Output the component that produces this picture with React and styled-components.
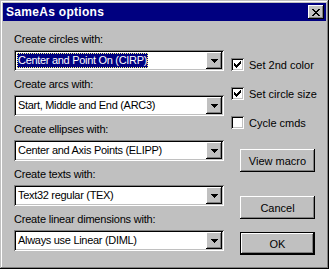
import React from "react";
import styled, { createGlobalStyle } from "styled-components";

const Global = createGlobalStyle`
  html, body { margin: 0; padding: 0; background: #c0c0c0; }
  body { font-family: "Liberation Sans", Arial, sans-serif; font-size: 11px; color: #000; }
`;

const raised = `
  box-shadow: inset -1px -1px #000, inset 1px 1px #fff, inset -2px -2px #808080, inset 2px 2px #c0c0c0;
`;
const sunken = `
  box-shadow: inset 1px 1px #808080, inset -1px -1px #fff, inset 2px 2px #000, inset -2px -2px #c0c0c0;
`;

const Window = styled.div`
  width: 329px;
  height: 269px;
  box-sizing: border-box;
  padding: 3px;
  background: #c0c0c0;
  box-shadow: inset -1px -1px #000, inset 1px 1px #c0c0c0, inset -2px -2px #808080, inset 2px 2px #fff;
  display: flex;
  flex-direction: column;
`;

const TitleBar = styled.div`
  height: 18px;
  background: #000080;
  display: flex;
  align-items: center;
  justify-content: space-between;
  padding: 0 2px 0 3px;
`;

const Title = styled.span`
  color: #fff;
  font-weight: bold;
  font-size: 12px;
  letter-spacing: 0.3px;
`;

const CloseButton = styled.div`
  width: 16px;
  height: 14px;
  background: #c0c0c0;
  ${raised}
  display: flex;
  align-items: center;
  justify-content: center;
`;

const Body = styled.div`
  display: flex;
  padding: 12px 0 0 11px;
`;

const LeftColumn = styled.div`
  width: 210px;
  display: flex;
  flex-direction: column;
  gap: 7px;
`;

const Group = styled.div`
  display: flex;
  flex-direction: column;
  gap: 4px;
`;

const Label = styled.div`
  line-height: 13px;
  height: 13px;
  white-space: nowrap;
  letter-spacing: -0.2px;
`;

const Combo = styled.div`
  height: 21px;
  box-sizing: border-box;
  padding: 2px;
  background: #fff;
  ${sunken}
  display: flex;
  align-items: stretch;
`;

const ComboText = styled.div`
  flex: 1;
  display: flex;
  align-items: center;
  padding-left: 1px;
  white-space: nowrap;
  overflow: hidden;
`;

const Value = styled.span`
  line-height: 15px;
  padding: 0 1px;
  letter-spacing: -0.3px;
  background: ${(p) => (p.$selected ? "#000080" : "transparent")};
  color: ${(p) => (p.$selected ? "#fff" : "#000")};
  outline: ${(p) => (p.$selected ? "1px dotted #ffff80" : "none")};
  outline-offset: -1px;
`;

const DropButton = styled.div`
  width: 16px;
  background: #c0c0c0;
  ${raised}
  display: flex;
  align-items: center;
  justify-content: center;
`;

const RightColumn = styled.div`
  margin-left: 7px;
  display: flex;
  flex-direction: column;
`;

const CheckList = styled.div`
  margin-top: 25px;
  display: flex;
  flex-direction: column;
  gap: 16px;
`;

const CheckRow = styled.div`
  display: flex;
  align-items: center;
  gap: 5px;
  height: 13px;
  white-space: nowrap;
`;

const Box = styled.div`
  width: 13px;
  height: 13px;
  box-sizing: border-box;
  background: #fff;
  ${sunken}
  display: flex;
  align-items: center;
  justify-content: center;
`;

const Buttons = styled.div`
  margin-top: 20px;
  margin-left: 9px;
  display: flex;
  flex-direction: column;
`;

const Button = styled.div`
  width: 75px;
  height: 23px;
  box-sizing: border-box;
  margin-top: ${(p) => p.$gap || 0}px;
  display: flex;
  align-items: center;
  justify-content: center;
  background: #c0c0c0;
  ${(p) =>
    p.$default
      ? `box-shadow: inset 0 0 0 1px #000, inset -2px -2px #000, inset 2px 2px #fff, inset -3px -3px #808080;`
      : `box-shadow: inset -1px -1px #000, inset 1px 1px #fff, inset -2px -2px #808080;`}
`;

const Arrow = () => (
  <svg width="7" height="4" viewBox="0 0 7 4" shapeRendering="crispEdges">
    <path d="M0 0h7v1h-1v1h-1v1h-1v1h-1v-1h-1v-1h-1v-1h-1z" fill="#000" />
  </svg>
);

const Check = () => (
  <svg width="7" height="7" viewBox="0 0 7 7" shapeRendering="crispEdges">
    <path
      d="M6 0h1v3h-1v1h-1v1h-1v1h-1v1h-1v-1h-1v-1h-1v-3h1v1h1v1h1v-1h1v-1h1v-1h1z"
      fill="#000"
    />
  </svg>
);

const CloseX = () => (
  <svg width="8" height="7" viewBox="0 0 8 7" shapeRendering="crispEdges">
    <path
      d="M0 0h2v1h1v1h2v-1h1v-1h2v1h-1v1h-1v1h-1v1h1v1h1v1h1v1h-2v-1h-1v-1h-2v1h-1v1h-2v-1h1v-1h1v-1h1v-1h-1v-1h-1v-1h-1z"
      fill="#000"
    />
  </svg>
);

const groups = [
  { label: "Create circles with:", value: "Center and Point On (CIRP)", selected: true },
  { label: "Create arcs with:", value: "Start, Middle and End (ARC3)" },
  { label: "Create ellipses with:", value: "Center and Axis Points (ELIPP)" },
  { label: "Create texts with:", value: "Text32 regular (TEX)" },
  { label: "Create linear dimensions with:", value: "Always use Linear (DIML)" },
];

const checks = [
  { label: "Set 2nd color", checked: true },
  { label: "Set circle size", checked: true },
  { label: "Cycle cmds", checked: false },
];

export default function App() {
  return (
    <>
      <Global />
      <Window>
        <TitleBar>
          <Title>SameAs options</Title>
          <CloseButton>
            <CloseX />
          </CloseButton>
        </TitleBar>
        <Body>
          <LeftColumn>
            {groups.map((g) => (
              <Group key={g.label}>
                <Label>{g.label}</Label>
                <Combo>
                  <ComboText>
                    <Value $selected={g.selected}>{g.value}</Value>
                  </ComboText>
                  <DropButton>
                    <Arrow />
                  </DropButton>
                </Combo>
              </Group>
            ))}
          </LeftColumn>
          <RightColumn>
            <CheckList>
              {checks.map((c) => (
                <CheckRow key={c.label}>
                  <Box>{c.checked && <Check />}</Box>
                  {c.label}
                </CheckRow>
              ))}
            </CheckList>
            <Buttons>
              <Button>View macro</Button>
              <Button $gap={24}>Cancel</Button>
              <Button $gap={13} $default>
                OK
              </Button>
            </Buttons>
          </RightColumn>
        </Body>
      </Window>
    </>
  );
}
